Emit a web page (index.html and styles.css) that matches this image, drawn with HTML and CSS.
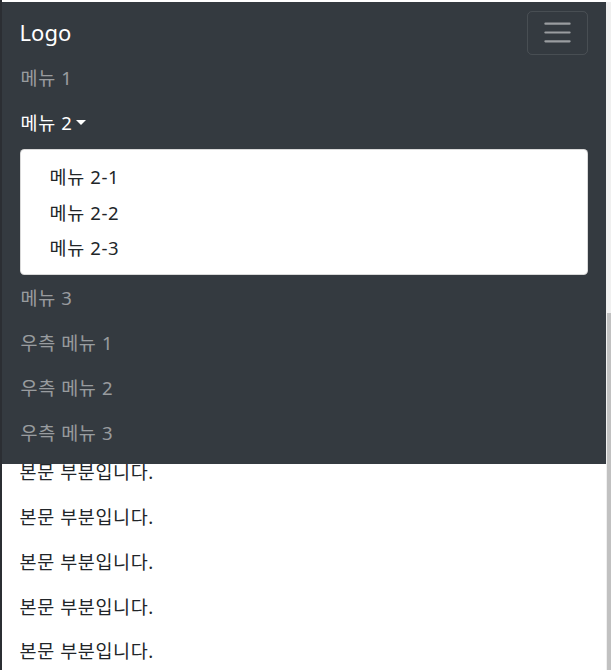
FILE: index.html
```html
<!DOCTYPE html>
<html lang="ko">
<head>
<meta charset="utf-8">
<title>Navbar</title>
<link rel="stylesheet" href="styles.css">
</head>
<body>
<div class="frame">
  <div class="viewport">
    <main class="content">
      <p>본문 부분입니다.</p>
      <p>본문 부분입니다.</p>
      <p>본문 부분입니다.</p>
      <p>본문 부분입니다.</p>
      <p>본문 부분입니다.</p>
    </main>
    <nav class="navbar">
      <div class="navbar-top">
        <a class="brand" href="#">Logo</a>
        <button class="toggler" type="button" aria-label="Toggle navigation">
          <svg class="toggler-icon" viewBox="0 0 30 30" width="33" height="33" aria-hidden="true">
            <path d="M4 7h22M4 15h22M4 23h22" stroke="rgba(255,255,255,0.5)" stroke-width="2" stroke-linecap="round" fill="none"/>
          </svg>
        </button>
      </div>
      <ul class="nav">
        <li><a class="nav-link" href="#">메뉴 1</a></li>
        <li class="dropdown">
          <a class="nav-link active" href="#">메뉴 2<span class="caret"></span></a>
          <div class="dropdown-menu">
            <a class="dropdown-item" href="#">메뉴 2-1</a>
            <a class="dropdown-item" href="#">메뉴 2-2</a>
            <a class="dropdown-item" href="#">메뉴 2-3</a>
          </div>
        </li>
        <li><a class="nav-link" href="#">메뉴 3</a></li>
      </ul>
      <ul class="nav">
        <li><a class="nav-link" href="#">우측 메뉴 1</a></li>
        <li><a class="nav-link" href="#">우측 메뉴 2</a></li>
        <li><a class="nav-link" href="#">우측 메뉴 3</a></li>
      </ul>
    </nav>
  </div>
  <div class="scrollbar"><div class="thumb"></div></div>
</div>
</body>
</html>
```

FILE: styles.css
```css
html, body {
  margin: 0;
  height: 100%;
  overflow: hidden;
}

body {
  font-family: "Noto Sans", "Noto Sans CJK KR", sans-serif;
  font-size: 17.6px;
  color: #212529;
  background: #fff;
}

a {
  text-decoration: none;
}

.frame {
  display: flex;
  height: 670px;
  box-sizing: border-box;
  border-left: 2px solid #2b2e33;
  padding-top: 2px;
  background: #fff;
}

.viewport {
  flex: 1;
  position: relative;
  overflow: hidden;
}

.content {
  padding: 456.25px 17.6px 0;
}

.content p {
  margin: 0 0 17.75px;
  line-height: 27px;
  font-size: 18.5px;
  letter-spacing: 0.6px;
}

.navbar {
  position: absolute;
  top: 0;
  left: 0;
  right: 0;
  background: #343a40;
  padding: 8.8px 17.6px 9px;
}

.navbar-top {
  display: flex;
  align-items: center;
  justify-content: space-between;
}

.brand {
  color: #fff;
  font-size: 22px;
  line-height: 33px;
  padding: 5.5px 0;
}

.toggler {
  display: flex;
  padding: 4.4px 13.2px;
  background: transparent;
  border: 1px solid rgba(255, 255, 255, 0.1);
  border-radius: 5px;
  cursor: pointer;
}

.toggler-icon {
  display: block;
}

.nav {
  list-style: none;
  margin: 0;
  padding: 0;
}

.nav-link {
  display: block;
  padding: 9px 0 9px 1px;
  line-height: 27px;
  font-size: 18.5px;
  letter-spacing: 0.6px;
  color: rgba(255, 255, 255, 0.5);
}

.nav-link.active {
  color: #fff;
}

.caret {
  display: inline-block;
  margin-left: 4px;
  vertical-align: 4.5px;
  border-top: 5.3px solid;
  border-left: 5.3px solid transparent;
  border-right: 5.3px solid transparent;
}

.dropdown-menu {
  margin-top: 4.5px;
  background: #fff;
  border: 1px solid rgba(0, 0, 0, 0.15);
  border-radius: 4.4px;
  padding: 8.8px 0;
}

.dropdown-item {
  display: block;
  padding: 0 26.4px 0 29px;
  line-height: 35.5px;
  font-size: 18.5px;
  letter-spacing: 0.6px;
  color: #212529;
}

.scrollbar {
  width: 5px;
  background: #f0f0f0;
  display: flex;
  flex-direction: column;
}

.thumb {
  margin: 311px 0 0 1px;
  flex: 1;
  background: #c1c1c1;
}
```
